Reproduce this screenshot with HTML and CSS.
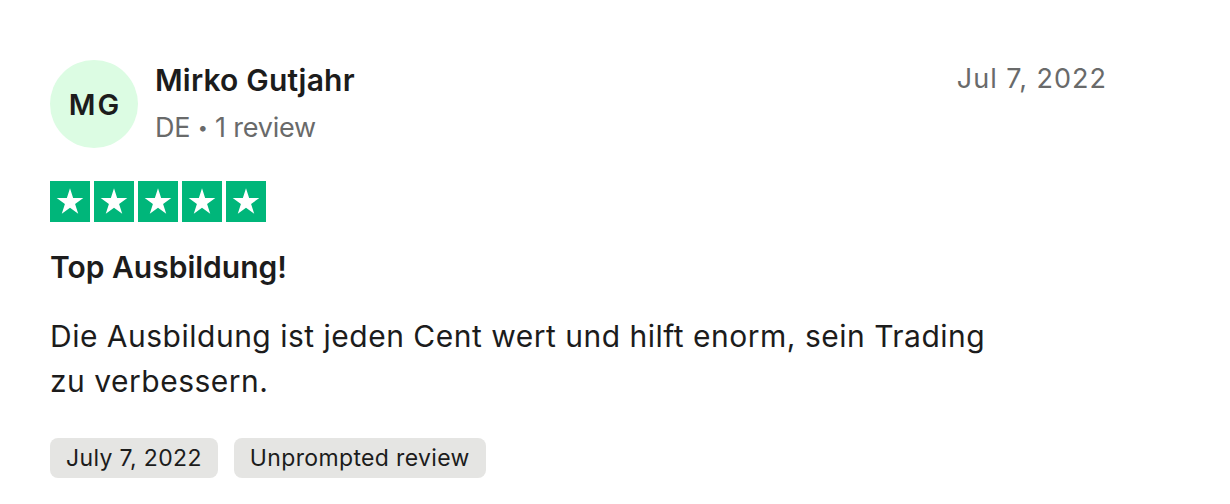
FILE: index.html
```html
<!DOCTYPE html>
<html lang="en">
<head>
    <meta charset="UTF-8">
    <meta name="viewport" content="width=device-width, initial-scale=1.0">
    <title>Review - Mirko Gutjahr</title>
    <link rel="stylesheet" href="styles.css">
</head>
<body>

    <!-- Review Card -->
    <article class="review">
        <header class="review-header">
            <div class="avatar">MG</div>
            <div class="author">
                <div class="author-name">Mirko Gutjahr</div>
                <div class="author-meta">DE <span class="dot">•</span> 1 review</div>
            </div>
            <time class="review-date">Jul 7, 2022</time>
        </header>

        <!-- Star rating -->
        <div class="stars">
            <span class="star"><svg viewBox="0 0 40 41"><path d="M20 7.3L23.14 16.97H33.31L25.09 22.95L28.23 32.63L20 26.65L11.77 32.63L14.91 22.95L6.69 16.97H16.86Z"/></svg></span>
            <span class="star"><svg viewBox="0 0 40 41"><path d="M20 7.3L23.14 16.97H33.31L25.09 22.95L28.23 32.63L20 26.65L11.77 32.63L14.91 22.95L6.69 16.97H16.86Z"/></svg></span>
            <span class="star"><svg viewBox="0 0 40 41"><path d="M20 7.3L23.14 16.97H33.31L25.09 22.95L28.23 32.63L20 26.65L11.77 32.63L14.91 22.95L6.69 16.97H16.86Z"/></svg></span>
            <span class="star"><svg viewBox="0 0 40 41"><path d="M20 7.3L23.14 16.97H33.31L25.09 22.95L28.23 32.63L20 26.65L11.77 32.63L14.91 22.95L6.69 16.97H16.86Z"/></svg></span>
            <span class="star"><svg viewBox="0 0 40 41"><path d="M20 7.3L23.14 16.97H33.31L25.09 22.95L28.23 32.63L20 26.65L11.77 32.63L14.91 22.95L6.69 16.97H16.86Z"/></svg></span>
        </div>

        <h2 class="review-title">Top Ausbildung!</h2>
        <p class="review-text">Die Ausbildung ist jeden Cent wert und hilft enorm, sein Trading zu verbessern.</p>

        <div class="tags">
            <span class="tag">July 7, 2022</span>
            <span class="tag">Unprompted review</span>
        </div>
    </article>

</body>
</html>
```

FILE: styles.css
```css
/* General Styles */
body {
    font-family: 'Inter', 'Liberation Sans', sans-serif;
    margin: 0;
    padding: 0;
    background-color: #fff;
    color: #1c1c1c;
}

/* Review Card */
.review {
    padding: 60px 123px 0 50px;
}

.review-header {
    display: flex;
    align-items: flex-start;
}

.avatar {
    width: 88px;
    height: 88px;
    border-radius: 50%;
    background-color: #dcfce3;
    display: flex;
    align-items: center;
    justify-content: center;
    font-size: 29px;
    font-weight: 600;
    letter-spacing: 2px;
    padding-left: 2px;
    box-sizing: border-box;
    color: #1c1c1c;
    flex-shrink: 0;
}

.author {
    margin-left: 17px;
    padding-top: 2px;
}

.author-name {
    font-size: 30px;
    font-weight: 600;
    letter-spacing: 0.2px;
    line-height: 36px;
}

.author-meta {
    font-size: 27px;
    color: #696a6a;
    line-height: 34px;
    margin-top: 13px;
    letter-spacing: -0.2px;
}

.author-meta .dot {
    font-size: 18px;
    vertical-align: 3px;
}

.review-date {
    margin-left: auto;
    font-size: 27px;
    color: #696a6a;
    line-height: 36px;
    padding-top: 1px;
    letter-spacing: 1px;
}

/* Stars */
.stars {
    display: flex;
    gap: 4px;
    margin-top: 33px;
}

.star {
    width: 40px;
    height: 41px;
    background-color: #00b67a;
}

.star svg {
    display: block;
    width: 40px;
    height: 41px;
    fill: #fff;
}

.review-title {
    font-size: 30px;
    font-weight: 600;
    margin: 28px 0 0;
    line-height: 34px;
}

.review-text {
    font-size: 30px;
    line-height: 45px;
    max-width: 950px;
    margin: 30px 0 0;
    letter-spacing: 0.5px;
}

/* Tags */
.tags {
    display: flex;
    gap: 16px;
    margin-top: 34px;
}

.tag {
    background-color: #e5e5e3;
    border-radius: 8px;
    padding: 0 16px;
    height: 40px;
    line-height: 40px;
    font-size: 23px;
    letter-spacing: 0.35px;
}
```
